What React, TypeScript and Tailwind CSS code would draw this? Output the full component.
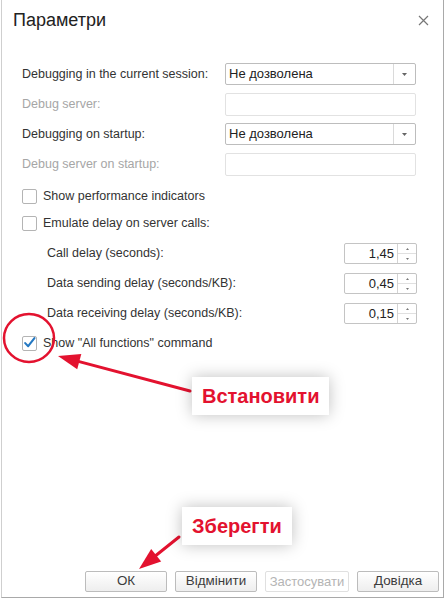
import React from "react";

function Arrow({ x1, y1, x2, y2 }: { x1: number; y1: number; x2: number; y2: number }) {
  // (x1,y1) tail, (x2,y2) tip
  const dx = x2 - x1;
  const dy = y2 - y1;
  const len = Math.hypot(dx, dy);
  const ux = dx / len;
  const uy = dy / len;
  const head = 22;
  const half = 8;
  const bx = x2 - ux * head;
  const by = y2 - uy * head;
  const pts = `${x2},${y2} ${bx - uy * half},${by + ux * half} ${bx + uy * half},${by - ux * half}`;
  return (
    <g>
      <line x1={x1} y1={y1} x2={bx + ux * 2} y2={by + uy * 2} stroke="#e3122f" strokeWidth="3" strokeLinecap="round" />
      <polygon points={pts} fill="#e3122f" />
    </g>
  );
}

function Select({ value }: { value: string }) {
  return (
    <div className="flex h-[22px] w-[191px] rounded-[2px] border border-[#bdbdbd] bg-white">
      <div className="flex flex-1 items-center pl-[3px] text-[13px] text-[#222]">{value}</div>
      <div className="flex w-[22px] items-center justify-center border-l border-[#dadada]">
        <svg width="5" height="3" viewBox="0 0 5 3">
          <path d="M0 0h5L2.5 3z" fill="#666" />
        </svg>
      </div>
    </div>
  );
}

function Field() {
  return <div className="h-[23px] w-[191px] rounded-[2px] border border-[#e2e2e2] bg-white" />;
}

function Check({ checked }: { checked?: boolean }) {
  return (
    <div className="flex h-[15px] w-[15px] items-center justify-center rounded-[2px] border border-[#b4b4b4] bg-white">
      {checked && (
        <svg width="15" height="13" viewBox="0 0 15 13" className="-mt-[2px]">
          <path d="M2.5 7.2l3.5 3.6L13.2 1.5" fill="none" stroke="#2478c2" strokeWidth="2.4" strokeLinecap="round" strokeLinejoin="round" />
        </svg>
      )}
    </div>
  );
}

function Spinner({ value }: { value: string }) {
  return (
    <div className="flex h-[21px] w-[73px] rounded-[2px] border border-[#c4c4c4] bg-white">
      <div className="flex flex-1 items-center justify-end pr-[3px] text-[13px] text-[#222]">{value}</div>
      <div className="flex w-[19px] flex-col border-l border-[#d4d4d4]">
        <div className="flex flex-1 items-center justify-center border-b border-[#e0e0e0]">
          <svg width="3" height="2" viewBox="0 0 3 2"><path d="M0 2h3L1.5 0z" fill="#777" /></svg>
        </div>
        <div className="flex flex-1 items-center justify-center">
          <svg width="3" height="2" viewBox="0 0 3 2"><path d="M0 0h3L1.5 2z" fill="#777" /></svg>
        </div>
      </div>
    </div>
  );
}

function Button({ label, disabled }: { label: string; disabled?: boolean }) {
  return (
    <div
      className={
        disabled
          ? "flex h-[21px] w-[84px] items-center justify-center rounded-[2px] border border-[#e0e0e0] bg-white text-[13px] text-[#b4b4b4]"
          : "flex h-[21px] w-[82px] items-center justify-center rounded-[2px] border border-[#bcbcbc] bg-gradient-to-b from-white to-[#eeeeee] text-[13.4px] text-[#3c3c3c]"
      }
    >
      {label}
    </div>
  );
}

export default function App() {
  return (
    <div className="relative h-[600px] w-[446px] bg-white font-['Liberation_Sans',Arial,sans-serif]">
      <div className="ml-[1px] flex h-[598px] w-[443px] flex-col border-x border-b border-l-[#cfcfcf] border-r-[#a9a9a9] border-b-[#a9a9a9] bg-white">
        {/* title bar */}
        <div className="flex h-[41px] items-center justify-between pl-[11px] pr-[14px]">
          <span className="text-[18px] text-[#222]">Параметри</span>
          <svg width="11" height="11" viewBox="0 0 11 11">
            <path d="M1 1l9 9M10 1l-9 9" stroke="#777" strokeWidth="1.2" />
          </svg>
        </div>

        {/* form */}
        <div className="mt-[22px] flex flex-col pl-[20px] text-[12.5px]">
          <div className="flex h-[22px] items-center">
            <span className="w-[203px] text-[#333]">Debugging in the current session:</span>
            <Select value="Не дозволена" />
          </div>
          <div className="mt-[8px] flex h-[22px] items-center">
            <span className="w-[203px] text-[#a6a6a6]">Debug server:</span>
            <Field />
          </div>
          <div className="mt-[8px] flex h-[22px] items-center">
            <span className="w-[203px] text-[#333]">Debugging on startup:</span>
            <Select value="Не дозволена" />
          </div>
          <div className="mt-[8px] flex h-[22px] items-center">
            <span className="w-[203px] text-[#a6a6a6]">Debug server on startup:</span>
            <Field />
          </div>

          <div className="mt-[10px] flex h-[22px] items-center gap-[6px]">
            <Check />
            <span className="text-[#333]">Show performance indicators</span>
          </div>
          <div className="mt-[5px] flex h-[22px] items-center gap-[6px]">
            <Check />
            <span className="text-[#333]">Emulate delay on server calls:</span>
          </div>

          <div className="mt-[9px] flex h-[21px] items-center justify-between pl-[25px] pr-[26px]">
            <span className="text-[#333]">Call delay (seconds):</span>
            <Spinner value="1,45" />
          </div>
          <div className="mt-[9px] flex h-[21px] items-center justify-between pl-[25px] pr-[26px]">
            <span className="text-[#333]">Data sending delay (seconds/KB):</span>
            <Spinner value="0,45" />
          </div>
          <div className="mt-[9px] flex h-[21px] items-center justify-between pl-[25px] pr-[26px]">
            <span className="text-[#333]">Data receiving delay (seconds/KB):</span>
            <Spinner value="0,15" />
          </div>

          <div className="mt-[8px] flex h-[22px] items-center gap-[6px]">
            <Check checked />
            <span className="text-[#333]">Show "All functions" command</span>
          </div>
        </div>

        {/* buttons */}
        <div className="mt-auto mb-[5px] flex items-center gap-[8px] pl-[83px]">
          <Button label="ОК" />
          <Button label="Відмінити" />
          <Button label="Застосувати" disabled />
          <Button label="Довідка" />
        </div>
      </div>

      {/* annotations */}
      <svg className="pointer-events-none absolute left-0 top-0" width="446" height="600">
        <ellipse cx="29" cy="338" rx="25" ry="24" fill="none" stroke="#e3122f" strokeWidth="2.5" />
        <Arrow x1={190} y1={391} x2={58} y2={356} />
        <Arrow x1={179} y1={537} x2={139} y2={569} />
      </svg>
      <div className="absolute left-[192px] top-[377px] bg-white px-[10px] py-[4px] text-[20px] font-bold text-[#e3122f] shadow-[0_0_16px_rgba(0,0,0,0.25)]">
        Встановити
      </div>
      <div className="absolute left-[182px] top-[507px] bg-white px-[10px] py-[4px] text-[20px] font-bold text-[#e3122f] shadow-[0_0_16px_rgba(0,0,0,0.25)]">
        Зберегти
      </div>
    </div>
  );
}
